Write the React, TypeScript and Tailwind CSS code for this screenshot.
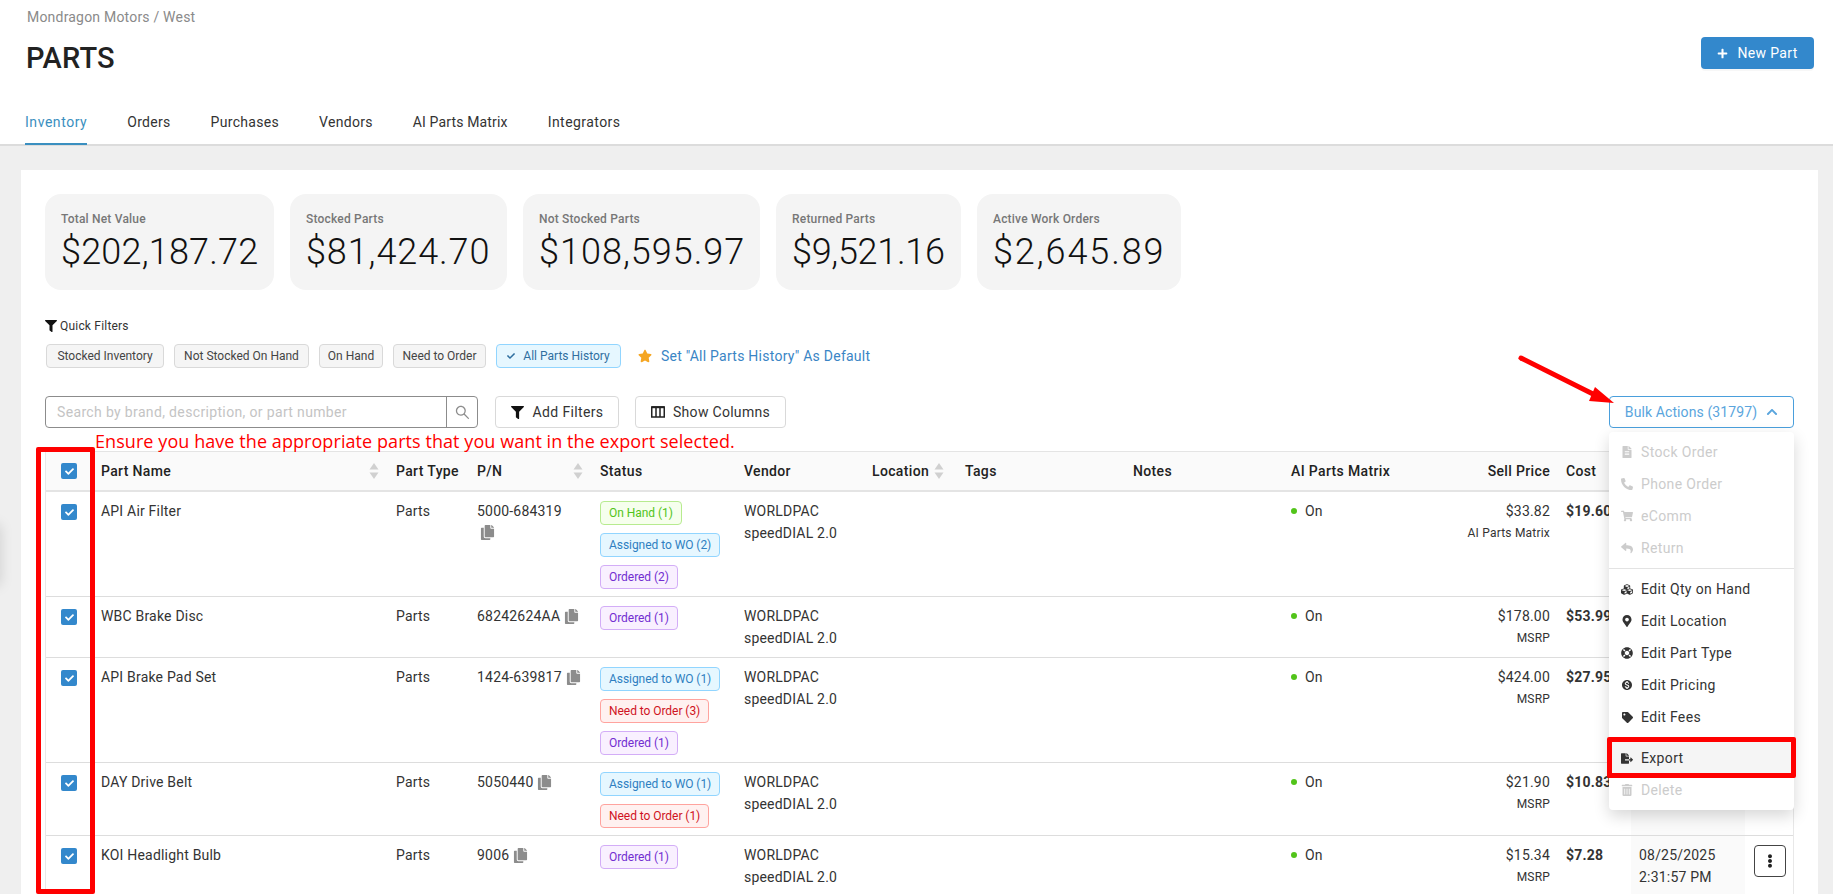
import React from "react";
import {
  FaFilter, FaStar, FaCheck, FaCopy, FaPlus, FaChevronUp, FaEllipsisV, FaFileAlt, FaPhoneAlt,
  FaShoppingCart, FaReply, FaCubes, FaMapMarkerAlt, FaLifeRing, FaTag, FaFileExport, FaTrashAlt,
} from "react-icons/fa";
import { MdMonetizationOn } from "react-icons/md";
import { AiOutlineSearch } from "react-icons/ai";

type ChipKind = "green" | "blue" | "purple" | "red";
const chipClass: Record<ChipKind, string> = {
  green: "border-[#b7eb8f] bg-[#f6ffed] text-[#52c41a]",
  blue: "border-[#91d5ff] bg-[#e6f7ff] text-[#2f7fc1]",
  purple: "border-[#d3adf7] bg-[#f9f0ff] text-[#722ed1]",
  red: "border-[#ffa39e] bg-[#fff1f0] text-[#cf1322]",
};

const rows: {
  name: string; pn: string; wrap?: boolean; chips: [ChipKind, string][]; sell: string; sub: string; cost: string; date?: [string, string];
}[] = [
  { name: "API Air Filter", pn: "5000-684319", wrap: true, chips: [["green", "On Hand (1)"], ["blue", "Assigned to WO (2)"], ["purple", "Ordered (2)"]], sell: "$33.82", sub: "AI Parts Matrix", cost: "$19.60" },
  { name: "WBC Brake Disc", pn: "68242624AA", chips: [["purple", "Ordered (1)"]], sell: "$178.00", sub: "MSRP", cost: "$53.99" },
  { name: "API Brake Pad Set", pn: "1424-639817", chips: [["blue", "Assigned to WO (1)"], ["red", "Need to Order (3)"], ["purple", "Ordered (1)"]], sell: "$424.00", sub: "MSRP", cost: "$27.95" },
  { name: "DAY Drive Belt", pn: "5050440", chips: [["blue", "Assigned to WO (1)"], ["red", "Need to Order (1)"]], sell: "$21.90", sub: "MSRP", cost: "$10.83" },
  { name: "KOI Headlight Bulb", pn: "9006", chips: [["purple", "Ordered (1)"]], sell: "$15.34", sub: "MSRP", cost: "$7.28", date: ["08/25/2025", "2:31:57 PM"] },
];

const stats = [
  ["Total Net Value", "$202,187.72", "w-[229px]", "tracking-[0.2px]"],
  ["Stocked Parts", "$81,424.70", "w-[217px]", "tracking-[0.9px]"],
  ["Not Stocked Parts", "$108,595.97", "w-[237px]", "tracking-[1px]"],
  ["Returned Parts", "$9,521.16", "w-[185px]", "tracking-[-0.3px]"],
  ["Active Work Orders", "$2,645.89", "w-[204px]", "tracking-[1.9px]"],
];

const filterChips = [
  ["Stocked Inventory", "w-[118px]"],
  ["Not Stocked On Hand", "w-[135px]"],
  ["On Hand", "w-[64px]"],
  ["Need to Order", "w-[93px]"],
];

function Sort() {
  return (
    <svg width="10" height="16" viewBox="0 0 10 16" className="shrink-0">
      <path d="M5 0 L9.5 6.5 H0.5 Z" fill="#d0d0d0" />
      <path d="M5 16 L9.5 9.5 H0.5 Z" fill="#d0d0d0" />
    </svg>
  );
}

function Check() {
  return (
    <span className="flex h-4 w-4 items-center justify-center rounded-[2px] bg-[#3388cc] text-white">
      <FaCheck size={9} />
    </span>
  );
}

function Chip({ kind, text }: { kind: ChipKind; text: string }) {
  return (
    <span className={`inline-flex h-6 w-fit items-center whitespace-nowrap rounded-[4px] border px-2 text-xs tracking-[-0.05px] ${chipClass[kind]}`}>
      {text}
    </span>
  );
}

function Copy() {
  return <FaCopy size={15} className="inline-block shrink-0 text-[#8c8c8c]" />;
}

const menuTop: [React.ReactNode, string][] = [
  [<FaFileAlt size={12} />, "Stock Order"],
  [<FaPhoneAlt size={12} />, "Phone Order"],
  [<FaShoppingCart size={12} />, "eComm"],
  [<FaReply size={12} />, "Return"],
];
const menuMid: [React.ReactNode, string][] = [
  [<FaCubes size={13} />, "Edit Qty on Hand"],
  [<FaMapMarkerAlt size={12} />, "Edit Location"],
  [<FaLifeRing size={12} />, "Edit Part Type"],
  [<MdMonetizationOn size={14} />, "Edit Pricing"],
  [<FaTag size={11} />, "Edit Fees"],
];

function MenuItem({ icon, label, disabled, hover }: { icon: React.ReactNode; label: string; disabled?: boolean; hover?: boolean }) {
  return (
    <div className={`flex h-8 items-center pl-3 text-sm tracking-[0.35px] ${disabled ? "text-[#cccccc]" : "text-[#333333]"} ${hover ? "bg-[#f5f5f5]" : ""}`}>
      <span className="flex w-3 justify-center">{icon}</span>
      <span className="ml-2">{label}</span>
    </div>
  );
}

const th = "h-[41px] border-b-2 border-t border-[#e4e4e4] bg-[#fafafa] px-2 text-left align-middle text-sm font-medium text-[#222222] tracking-[0.35px]";
const td = "border-b border-[#dddddd] px-2 pt-2 pb-2 align-top text-sm leading-[22px] text-[#333333] tracking-[0.2px]";
const tab = "pt-[3px] leading-[20px]";

export default function App() {
  return (
    <div className="relative h-[894px] w-[1833px] overflow-hidden bg-[#efefef] font-[Roboto,sans-serif] text-[#333333]">
      <header className="h-[146px] border-b-2 border-[#dcdcdc] bg-white">
        <div className="flex justify-between pl-[27px] pr-[19px]">
          <div>
            <div className="pt-[7px] text-sm leading-[20px] tracking-[0.2px] text-[#8a8a8a]">Mondragon Motors / West</div>
            <h1 className="ml-[-1px] mt-[15px] text-[29px] font-medium leading-[32px] tracking-[0.2px] text-[#222222]">PARTS</h1>
          </div>
          <button className="mt-[37px] flex h-8 w-[113px] items-center justify-center gap-[9px] rounded-[4px] bg-[#3388cc] text-sm text-white shadow-[0_2px_0_rgba(0,0,0,0.03)] tracking-[0.35px]">
            <FaPlus size={11} /> New Part
          </button>
        </div>
        <nav className="mt-[35px] flex gap-10 pl-[25px] text-sm tracking-[0.3px] text-[#333333]">
          <span className="h-[36px] border-b-2 border-[#3a8fc0] pt-[3px] leading-[20px] tracking-[0.55px] text-[#3a8fc0]">Inventory</span>
          <span className={tab}>Orders</span>
          <span className={tab}>Purchases</span>
          <span className={tab}>Vendors</span>
          <span className={tab + " tracking-[0.15px]"}>AI Parts Matrix</span>
          <span className={tab + " tracking-[0.45px]"}>Integrators</span>
        </nav>
      </header>

      <main className="pl-[21px] pr-[15px] pt-6">
        <div className="h-[800px] bg-white p-6">
          <div className="flex gap-4">
            {stats.map(([t, v, w, s]) => (
              <div key={t} className={`h-24 rounded-2xl bg-[#f4f4f4] px-4 pt-[16px] ${w}`}>
                <div className="text-xs font-medium leading-[18px] tracking-[0.2px] text-[#777777]">{t}</div>
                <div className={`mt-[2px] whitespace-nowrap text-[36px] font-light leading-[44px] text-[#111111] ${s}`}>{v}</div>
              </div>
            ))}
          </div>

          <div className="mt-[28px] flex h-4 items-center text-xs text-[#333333]">
            <FaFilter size={12} className="text-[#111111]" />
            <span className="ml-[3px] tracking-[0.2px]">Quick Filters</span>
          </div>

          <div className="ml-[1px] mt-[10px] flex h-6 items-center gap-[10px] text-xs text-[#444444]">
            {filterChips.map(([c, w]) => (
              <span key={c} className={`flex h-6 items-center justify-center whitespace-nowrap rounded-[4px] border border-[#d9d9d9] bg-[#f5f5f5] ${w}`}>{c}</span>
            ))}
            <span className="flex h-6 w-[125px] items-center justify-center gap-2 whitespace-nowrap rounded-[4px] border border-[#91d5ff] bg-[#e6f7ff] text-[#2f6f9f]">
              <FaCheck size={8} /> All Parts History
            </span>
            <span className="ml-[7px] flex items-center gap-[9px] whitespace-nowrap text-sm tracking-[0.25px] text-[#3a85c5]">
              <FaStar size={14} className="text-[#f5a623]" /> Set "All Parts History" As Default
            </span>
          </div>

          <div className="mt-[28px] flex h-8 items-center">
            <div className="flex h-8 w-[433px] rounded-[4px] border border-[#8c8c8c]">
              <div className="flex-1 pl-[11px] text-sm leading-[30px] tracking-[0.35px] text-[#c4c4c4]">Search by brand, description, or part number</div>
              <div className="flex w-[31px] items-center justify-center border-l border-[#8c8c8c] text-[#8c8c8c]">
                <AiOutlineSearch size={17} />
              </div>
            </div>
            <button className="ml-[17px] flex h-8 w-[124px] items-center justify-center gap-[9px] rounded-[4px] border border-[#d9d9d9] bg-white text-sm tracking-[0.35px] text-[#333333]">
              <FaFilter size={13} className="text-[#111111]" /> Add Filters
            </button>
            <button className="ml-4 flex h-8 w-[151px] items-center justify-center gap-[8px] rounded-[4px] border border-[#d9d9d9] bg-white text-sm tracking-[0.3px] text-[#333333]">
              <svg width="14" height="12" viewBox="0 0 14 12" fill="none" stroke="#222222" strokeWidth="1.5">
                <rect x="0.75" y="1" width="12.5" height="10" />
                <path d="M5 1v10M9 1v10" />
                <path d="M0.75 1.2h12.5" strokeWidth="2" />
              </svg>
              Show Columns
            </button>
            <div className="relative ml-auto">
              <button className="flex h-8 w-[185px] items-center justify-center gap-[9px] rounded-[4px] border border-[#4a9fdc] bg-white text-sm tracking-[0.1px] text-[#5aa5dd]">
                Bulk Actions (31797) <FaChevronUp size={12} />
              </button>
              <div className="absolute left-0 top-9 z-20 h-[378px] w-[185px] rounded-[4px] bg-white py-1 shadow-[0_6px_16px_rgba(0,0,0,0.16)]">
                {menuTop.map(([i, l]) => <MenuItem key={l} icon={i} label={l} disabled />)}
                <div className="my-[4px] h-px bg-[#e3e3e3]" />
                {menuMid.map(([i, l]) => <MenuItem key={l} icon={i} label={l} />)}
                <div className="h-[9px]" />
                <MenuItem icon={<FaFileExport size={13} />} label="Export" hover />
                <MenuItem icon={<FaTrashAlt size={12} />} label="Delete" disabled />
              </div>
            </div>
          </div>

          <table className="mt-[23px] w-[1749px] table-fixed border-separate border-spacing-0 border-l border-r border-[#e8e8e8]">
            <colgroup>
              <col className="w-[47px]" /><col className="w-[295px]" /><col className="w-[81px]" /><col className="w-[123px]" />
              <col className="w-[144px]" /><col className="w-[128px]" /><col className="w-[93px]" /><col className="w-[168px]" />
              <col className="w-[158px]" /><col className="w-[117px]" /><col className="w-[158px]" /><col className="w-[73px]" />
              <col className="w-[114px]" /><col className="w-[48px]" />
            </colgroup>
            <thead>
              <tr>
                <th className={th + " pl-[15px] pr-0"}><Check /></th>
                <th className={th}><div className="flex items-center justify-between pr-[1px]">Part Name <Sort /></div></th>
                <th className={th}>Part Type</th>
                <th className={th}><div className="flex items-center justify-between pr-[1px]">P/N <Sort /></div></th>
                <th className={th}>Status</th>
                <th className={th}>Vendor</th>
                <th className={th}><div className="flex items-center gap-[5px] whitespace-nowrap">Location <Sort /></div></th>
                <th className={th}>Tags</th>
                <th className={th}>Notes</th>
                <th className={th + " whitespace-nowrap"}>AI Parts Matrix</th>
                <th className={th + " text-right"}>Sell Price</th>
                <th className={th}>Cost</th>
                <th className={th}></th>
                <th className={th}></th>
              </tr>
            </thead>
            <tbody>
              {rows.map((r) => (
                <tr key={r.name}>
                  <td className={td + " pl-[15px] pr-0 pt-[12px]"}><Check /></td>
                  <td className={td}>{r.name}</td>
                  <td className={td}>Parts</td>
                  <td className={td}>
                    {r.wrap ? (
                      <div>
                        <div>{r.pn}</div>
                        <div className="ml-[3px] mt-[3px] flex"><Copy /></div>
                      </div>
                    ) : (
                      <div className="flex items-center gap-[4px] whitespace-nowrap">{r.pn}<Copy /></div>
                    )}
                  </td>
                  <td className="border-b border-[#dddddd] px-2 pb-[7px] pt-[9px] align-top">
                    <div className="flex flex-col gap-2">
                      {r.chips.map(([k, t]) => <Chip key={t} kind={k} text={t} />)}
                    </div>
                  </td>
                  <td className={td}>WORLDPAC<br />speedDIAL 2.0</td>
                  <td className={td}></td>
                  <td className={td}></td>
                  <td className={td}></td>
                  <td className={td}>
                    <div className="flex items-center gap-[8px]">
                      <span className="h-[6px] w-[6px] rounded-full bg-[#52c41a]" /> On
                    </div>
                  </td>
                  <td className={td + " text-right"}>
                    <div>{r.sell}</div>
                    <div className="text-xs leading-[22px]">{r.sub}</div>
                  </td>
                  <td className={td + " font-bold"}>{r.cost}</td>
                  <td className={td + " bg-[#fafafa]"}>
                    {r.date && <>{r.date[0]}<br />{r.date[1]}</>}
                  </td>
                  <td className={td + " pl-[9px] pr-0 pt-[9px]"}>
                    {r.date && (
                      <button className="flex h-8 w-8 items-center justify-center rounded-[4px] border border-[#444444] bg-white text-[#222222]">
                        <FaEllipsisV size={14} />
                      </button>
                    )}
                  </td>
                </tr>
              ))}
            </tbody>
          </table>
        </div>
      </main>

      <div className="absolute left-[-16px] top-[525px] h-[60px] w-4 shadow-[0_0_14px_rgba(0,0,0,0.14)]" />
      <div className="absolute left-[95px] top-[429px] z-10 whitespace-nowrap font-['Open_Sans',sans-serif] text-[18px] leading-[24px] tracking-[0.07px] text-[#ff0000]">
        Ensure you have the appropriate parts that you want in the export selected.
      </div>
      <div className="absolute left-[36px] top-[447px] z-30 h-[447px] w-[59px] rounded-[2px] border-[5px] border-[#ff0000]" />
      <div className="absolute left-[1607px] top-[737px] z-30 h-[41px] w-[189px] rounded-[2px] border-[5px] border-[#ff0000]" />
      <svg className="absolute left-[1510px] top-[350px] z-30" width="110" height="60" viewBox="1510 350 110 60">
        <path d="M1521 358 L1597 396" stroke="#ff0000" strokeWidth="5" strokeLinecap="round" />
        <path d="M1614 403 L1595 387 L1589 401 Z" fill="#ff0000" />
      </svg>
    </div>
  );
}
